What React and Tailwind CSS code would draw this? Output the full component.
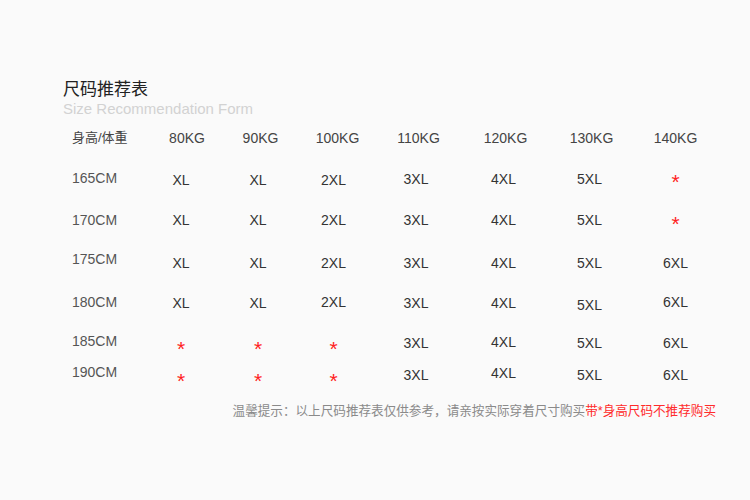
const font = "font-['Liberation_Sans','Noto_Sans_CJK_SC',sans-serif]";

const columns = [
  { name: '80KG', w: 'w-[78px]', shift: 'pl-[12px]' },
  { name: '90KG', w: 'w-[76px]', shift: 'pl-[5px]' },
  { name: '100KG', w: 'w-[75px]', shift: 'pl-[8px]' },
  { name: '110KG', w: 'w-[90px]', shift: 'pl-[5px]' },
  { name: '120KG', w: 'w-[85px]', shift: 'pl-[4px]' },
  { name: '130KG', w: 'w-[87px]', shift: 'pl-[4px]' },
  { name: '140KG', w: 'w-[85px]', shift: '' },
];

// each cell: [value, top offset class]; '*' means not recommended
const rows = [
  {
    label: '165CM',
    h: 'h-[42px]',
    cells: [['XL', 'mt-[2px]'], ['XL', 'mt-[2px]'], ['2XL', 'mt-[2px]'], ['3XL', 'mt-[1px]'], ['4XL', 'mt-[1px]'], ['5XL', 'mt-[1px]'], ['*', 'mt-[1px]']],
  },
  {
    label: '170CM',
    h: 'h-[39px]',
    cells: [['XL', ''], ['XL', ''], ['2XL', ''], ['3XL', ''], ['4XL', ''], ['5XL', ''], ['*', 'mt-[1px]']],
  },
  {
    label: '175CM',
    h: 'h-[43px]',
    cells: [['XL', 'mt-[4px]'], ['XL', 'mt-[4px]'], ['2XL', 'mt-[4px]'], ['3XL', 'mt-[4px]'], ['4XL', 'mt-[4px]'], ['5XL', 'mt-[4px]'], ['6XL', 'mt-[3.5px]']],
  },
  {
    label: '180CM',
    h: 'h-[39px]',
    cells: [['XL', 'mt-[1px]'], ['XL', 'mt-[1px]'], ['2XL', ''], ['3XL', 'mt-[1px]'], ['4XL', 'mt-[1px]'], ['5XL', 'mt-[3px]'], ['6XL', '-mt-[0.5px]']],
  },
  {
    label: '185CM',
    h: 'h-[31px]',
    cells: [['*', 'mt-[5px]'], ['*', 'mt-[5px]'], ['*', 'mt-[5px]'], ['3XL', 'mt-[1.5px]'], ['4XL', 'mt-[0.5px]'], ['5XL', 'mt-[1.5px]'], ['6XL', 'mt-[1.5px]']],
  },
  {
    label: '190CM',
    h: 'h-[16px]',
    cells: [['*', 'mt-[5.5px]'], ['*', 'mt-[5.5px]'], ['*', 'mt-[5.5px]'], ['3XL', 'mt-[2.5px]'], ['4XL', 'mt-[1px]'], ['5XL', 'mt-[3px]'], ['6XL', 'mt-[2.5px]']],
  },
];

function Cell({ value, offset, w }) {
  if (value === '*') {
    return (
      <div className={`${w} shrink-0 text-center`}>
        <span className={`block h-[20px] text-[21px] leading-none text-[#ff1f1f] ${offset}`}>*</span>
      </div>
    );
  }
  return (
    <div className={`${w} shrink-0 text-center text-[#333] ${offset}`}>{value}</div>
  );
}

export default function App() {
  return (
    <div className={`flex h-[500px] w-[750px] flex-col bg-[#fafafa] pt-[80px] pl-[63px] pr-[34px] ${font}`}>
      <h1 className="text-[17px] leading-[20px] font-normal text-[#222]">尺码推荐表</h1>
      <p className="mt-[1px] text-[15px] leading-[16px] text-[#d2d2d2]">Size Recommendation Form</p>

      <div className="mt-[13px] ml-[9px] flex flex-col text-[14px] leading-[16px]">
        <div className="flex h-[40px] items-start">
          <div className="w-[70px] shrink-0 text-[13px] text-[#444]">身高/体重</div>
          {columns.map((c) => (
            <div key={c.name} className={`${c.w} ${c.shift} shrink-0 text-center text-[#444]`}>
              {c.name}
            </div>
          ))}
        </div>

        {rows.map((r) => (
          <div key={r.label} className={`flex ${r.h} items-start`}>
            <div className="w-[70px] shrink-0 text-[#555]">{r.label}</div>
            {r.cells.map(([value, offset], i) => (
              <Cell key={i} value={value} offset={offset} w={columns[i].w} />
            ))}
          </div>
        ))}
      </div>

      <div className="mt-[23px] flex justify-end text-[12.6px] leading-[16px]">
        <p className="text-[#8a8a8a]">
          温馨提示：以上尺码推荐表仅供参考，请亲按实际穿着尺寸购买
          <span className="text-[#ff2b2b]">带*身高尺码不推荐购买</span>
        </p>
      </div>
    </div>
  );
}
